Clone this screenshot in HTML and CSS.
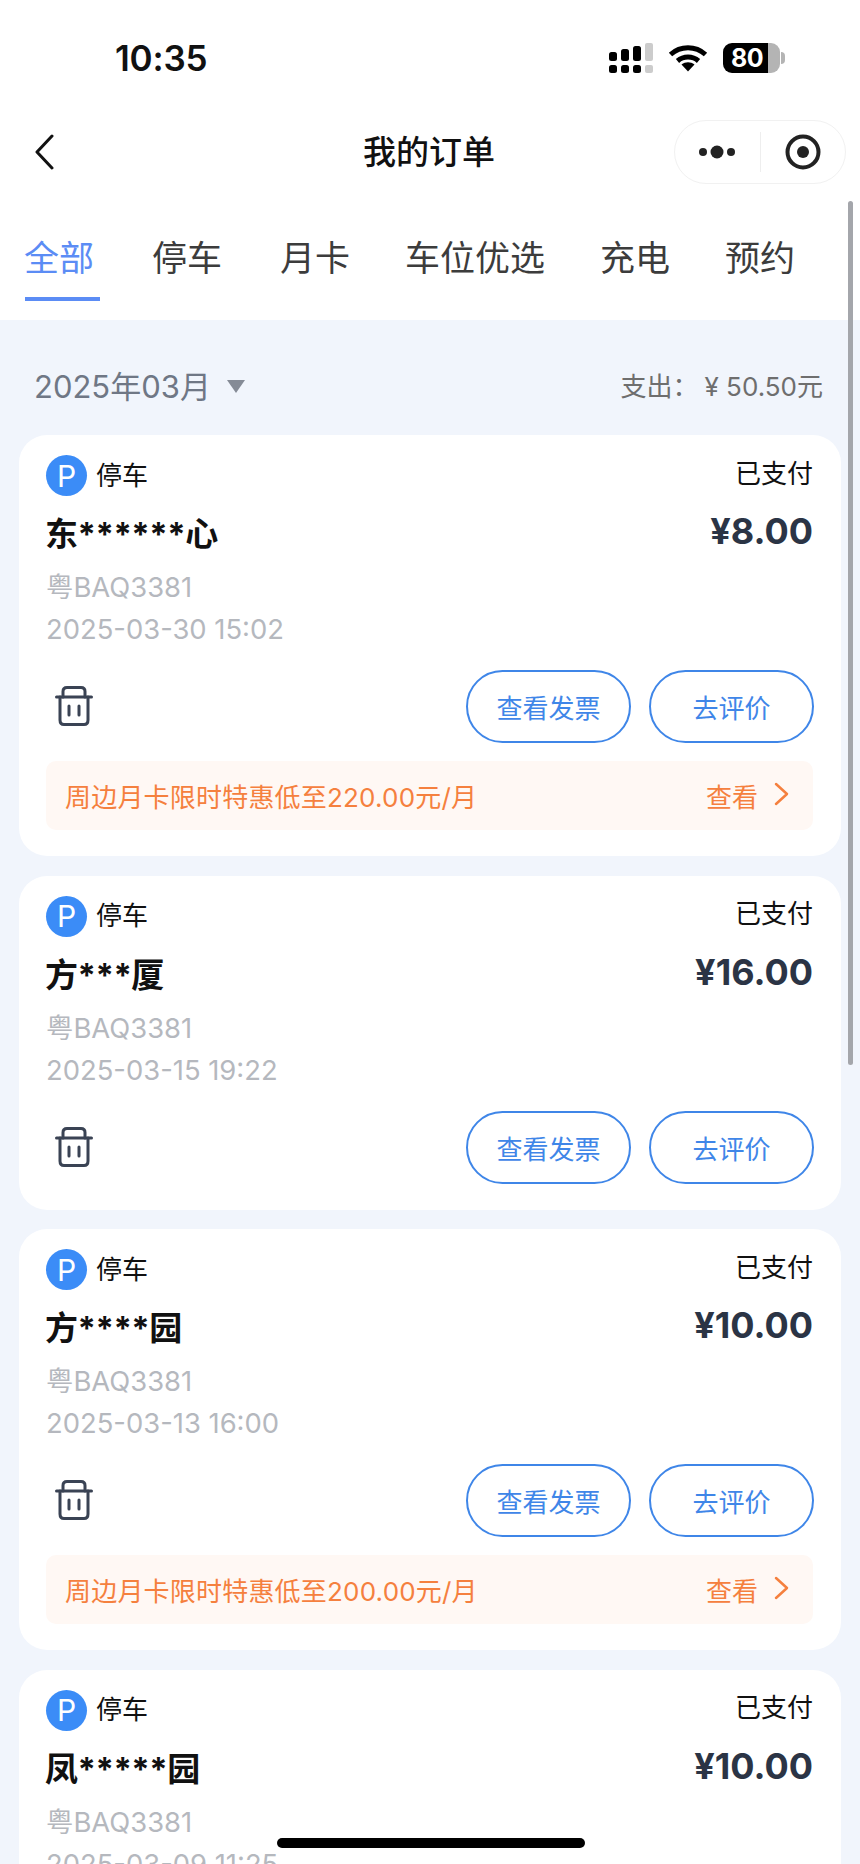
FILE: index.html
```html
<!DOCTYPE html>
<html lang="zh-CN">
<head>
<meta charset="UTF-8">
<meta name="viewport" content="width=device-width, initial-scale=1.0">
<title>我的订单</title>
<link rel="stylesheet" href="styles.css">
</head>
<body>
<div class="screen">
  <header class="top">
    <div class="status-bar">
      <span class="clock">10:35</span>
      <div class="status-icons">
        <svg class="signal" width="44" height="30" viewBox="0 0 44 30">
          <rect x="0" y="9" width="8" height="9" rx="2.5"/><rect x="12" y="6" width="8" height="12" rx="2.5"/><rect x="24" y="3" width="8" height="15" rx="2.5"/>
          <rect x="36" y="0" width="8" height="18" rx="2" fill="#ccc"/>
          <rect x="0" y="22" width="8" height="8" rx="2.5"/><rect x="12" y="22" width="8" height="8" rx="2.5"/><rect x="24" y="22" width="8" height="8" rx="2.5"/>
          <rect x="36" y="22" width="8" height="8" rx="2" fill="#ccc"/>
        </svg>
        <svg class="wifi" width="40" height="30" viewBox="0 0 40 30" fill="none" stroke="#000" stroke-width="5">
          <path d="M2.5 11.5C12.5 2.5 27.500 2.500 37.500 11.500"/>
          <path d="M9.500 18C15.500 12.800 24.500 12.800 30.500 18"/>
          <path d="M13.500 21.500L20 28.500L26.500 21.500C22.500 18.500 17.500 18.500 13.500 21.500Z" fill="#000" stroke="none"/>
        </svg>
        <div class="battery"><span class="battery-num">80</span></div>
      </div>
    </div>
    <div class="nav-bar">
      <div class="nav-left">
        <svg width="20" height="36" viewBox="0 0 20 36" fill="none" stroke="#111" stroke-width="3" stroke-linecap="round" stroke-linejoin="round"><path d="M18 2L3 18L18 34"/></svg>
      </div>
      <div class="nav-title">我的订单</div>
      <div class="nav-right">
        <div class="capsule">
          <div class="capsule-part">
            <svg width="38" height="14" viewBox="0 0 38 14" fill="#222"><circle cx="5" cy="7" r="4"/><circle cx="19" cy="7" r="6.500"/><circle cx="33" cy="7" r="4"/></svg>
          </div>
          <div class="capsule-line"></div>
          <div class="capsule-part">
            <svg width="36" height="36" viewBox="0 0 36 36" fill="#222"><circle cx="18" cy="18" r="15.500" fill="none" stroke="#222" stroke-width="4"/><circle cx="18" cy="18" r="6"/></svg>
          </div>
        </div>
      </div>
    </div>
    <ul class="tabs">
      <li class="tab active">全部</li>
      <li class="tab">停车</li>
      <li class="tab">月卡</li>
      <li class="tab">车位优选</li>
      <li class="tab">充电</li>
      <li class="tab">预约</li>
    </ul>
  </header>

  <main class="content">
    <div class="month-row">
      <div class="month">2025年03月<span class="month-arrow"></span></div>
      <div class="spend">支出：<span class="spend-yen">¥</span> 50.50元</div>
    </div>

    <div class="card">
      <div class="row-top">
        <div class="kind"><span class="p-icon">P</span>停车</div>
        <div class="state">已支付</div>
      </div>
      <div class="row-name">
        <div class="name">东******心</div>
        <div class="price">¥8.00</div>
      </div>
      <div class="meta">粤BAQ3381</div>
      <div class="meta meta-date">2025-03-30 15:02</div>
      <div class="row-actions">
        <svg class="trash" width="38" height="40" viewBox="0 0 38 40" fill="none" stroke="#3a4354" stroke-width="3" stroke-linecap="round" stroke-linejoin="round"><path d="M1.500 11H36.500"/><path d="M8 11V5.500C8 3 9.500 1.500 12 1.500H26C28.500 1.500 30 3 30 5.500V11"/><path d="M5 11V34C5 36.800 6.500 38.500 9 38.500H29C31.500 38.500 33 36.800 33 34V11"/><path d="M14 20V29M24 20V29"/></svg>
        <div class="btns"><a class="btn">查看发票</a><a class="btn">去评价</a></div>
      </div>
      <div class="promo">
        <span>周边月卡限时特惠低至220.00元/月</span>
        <span class="promo-link">查看<svg width="16" height="24" viewBox="0 0 16 24" fill="none" stroke="#f5803e" stroke-width="2.500" stroke-linecap="round" stroke-linejoin="round"><path d="M3 2L14 12L3 22"/></svg></span>
      </div>
    </div>

    <div class="card">
      <div class="row-top">
        <div class="kind"><span class="p-icon">P</span>停车</div>
        <div class="state">已支付</div>
      </div>
      <div class="row-name">
        <div class="name">方***厦</div>
        <div class="price">¥16.00</div>
      </div>
      <div class="meta">粤BAQ3381</div>
      <div class="meta meta-date">2025-03-15 19:22</div>
      <div class="row-actions">
        <svg class="trash" width="38" height="40" viewBox="0 0 38 40" fill="none" stroke="#3a4354" stroke-width="3" stroke-linecap="round" stroke-linejoin="round"><path d="M1.500 11H36.500"/><path d="M8 11V5.500C8 3 9.500 1.500 12 1.500H26C28.500 1.500 30 3 30 5.500V11"/><path d="M5 11V34C5 36.800 6.500 38.500 9 38.500H29C31.500 38.500 33 36.800 33 34V11"/><path d="M14 20V29M24 20V29"/></svg>
        <div class="btns"><a class="btn">查看发票</a><a class="btn">去评价</a></div>
      </div>
    </div>

    <div class="card">
      <div class="row-top">
        <div class="kind"><span class="p-icon">P</span>停车</div>
        <div class="state">已支付</div>
      </div>
      <div class="row-name">
        <div class="name">方****园</div>
        <div class="price">¥10.00</div>
      </div>
      <div class="meta">粤BAQ3381</div>
      <div class="meta meta-date">2025-03-13 16:00</div>
      <div class="row-actions">
        <svg class="trash" width="38" height="40" viewBox="0 0 38 40" fill="none" stroke="#3a4354" stroke-width="3" stroke-linecap="round" stroke-linejoin="round"><path d="M1.500 11H36.500"/><path d="M8 11V5.500C8 3 9.500 1.500 12 1.500H26C28.500 1.500 30 3 30 5.500V11"/><path d="M5 11V34C5 36.800 6.500 38.500 9 38.500H29C31.500 38.500 33 36.800 33 34V11"/><path d="M14 20V29M24 20V29"/></svg>
        <div class="btns"><a class="btn">查看发票</a><a class="btn">去评价</a></div>
      </div>
      <div class="promo">
        <span>周边月卡限时特惠低至200.00元/月</span>
        <span class="promo-link">查看<svg width="16" height="24" viewBox="0 0 16 24" fill="none" stroke="#f5803e" stroke-width="2.500" stroke-linecap="round" stroke-linejoin="round"><path d="M3 2L14 12L3 22"/></svg></span>
      </div>
    </div>

    <div class="card">
      <div class="row-top">
        <div class="kind"><span class="p-icon">P</span>停车</div>
        <div class="state">已支付</div>
      </div>
      <div class="row-name">
        <div class="name">凤*****园</div>
        <div class="price">¥10.00</div>
      </div>
      <div class="meta">粤BAQ3381</div>
      <div class="meta meta-date">2025-03-09 11:25</div>
    </div>
  </main>

  <div class="scrollbar"></div>
  <div class="home-bar"></div>
</div>
</body>
</html>
```

FILE: styles.css
```css
*{margin:0;padding:0;box-sizing:border-box;}
:root{
  --blue:#3f86e8;
  --tab-blue:#5b8cf5;
  --orange:#f5803e;
  --page:#f1f5fc;
  --grey:#b5b8be;
}
html,body{height:1864px;overflow:hidden;}
body{font-family:Inter,'Noto Sans CJK SC',sans-serif;background:var(--page);color:#111;}
.screen{position:relative;width:860px;height:1864px;overflow:hidden;}

.top{background:#fff;height:320px;padding-top:43px;}
.status-bar{display:flex;justify-content:space-between;align-items:center;height:30px;padding:0 80px 0 115px;}
.clock{font-size:35px;font-weight:600;line-height:40px;letter-spacing:-.2px;}
.status-icons{display:flex;align-items:center;gap:15px;}
.signal,.wifi{display:block;}
.battery{position:relative;width:57px;height:30px;border-radius:9px;background:linear-gradient(90deg,#000 0,#000 45px,#b4b4b4 45px);display:flex;align-items:center;padding-left:8px;}
.battery:after{content:'';position:absolute;right:-5px;top:9px;width:4px;height:12px;border-radius:0 4px 4px 0;background:#b4b4b4;}
.battery-num{color:#fff;font-size:25px;font-weight:700;line-height:30px;letter-spacing:-.5px;}

.nav-bar{display:grid;grid-template-columns:1fr auto 1fr;align-items:center;height:64px;margin-top:47px;padding:0 14px 0 12px;}
.nav-left{padding-left:22px;}
.nav-left svg{display:block;}
.nav-title{font-size:33px;font-weight:500;line-height:64px;}
.nav-right{display:flex;justify-content:flex-end;}
.capsule{display:flex;align-items:center;width:172px;height:64px;border:1px solid #f1f1f1;border-radius:32px;}
.capsule-part{flex:1;display:flex;align-items:center;justify-content:center;}
.capsule-line{width:1px;height:40px;background:#eee;}

.tabs{display:flex;list-style:none;gap:55px;padding:49px 0 0 24px;}
.tab{position:relative;font-size:35px;line-height:50px;color:#3c3c3c;height:68px;}
.tab:nth-child(-n+2){margin-right:3px;}
.tab.active{color:var(--tab-blue);}
.tab.active:after{content:'';position:absolute;left:1px;bottom:0;width:75px;height:4px;background:var(--tab-blue);}

.content{padding:0 19px;}
.month-row{display:flex;justify-content:space-between;align-items:center;height:115px;padding:14px 18px 0 16px;}
.month{display:flex;align-items:center;font-size:31px;color:#6f7785;margin-left:-1px;}
.month-arrow{width:0;height:0;margin:4px 0 0 16px;border-left:9.500px solid transparent;border-right:9.500px solid transparent;border-top:13px solid #858b96;}
.spend{font-size:26px;color:#6e6e6e;}
.spend-yen{margin-left:6px;}

.card{background:#fff;border-radius:28px;padding:20px 28px 26px 27px;margin-bottom:19.500px;}
.row-top{display:flex;justify-content:space-between;align-items:center;height:41px;}
.kind{display:flex;align-items:center;font-size:26px;gap:9px;line-height:36px;}
.p-icon{display:flex;align-items:center;justify-content:center;width:41px;height:41px;border-radius:50%;background:#3b8cf7;color:#fff;font-size:30px;font-weight:400;}
.state{font-size:26px;line-height:36px;margin-top:-4px;}
.row-name{display:flex;justify-content:space-between;align-items:center;height:52px;margin-top:12px;}
.name{font-size:33px;font-weight:700;line-height:52px;letter-spacing:-.5px;margin-left:-1px;}
.price{font-size:36px;font-weight:700;color:#2b3445;margin-top:-6px;}
.meta{font-size:27.400px;line-height:42px;color:var(--grey);margin-top:6px;}
.meta-date{margin-top:0;}
.row-actions{display:flex;justify-content:space-between;align-items:center;margin-top:20px;height:73px;padding-left:9px;}
.trash{display:block;margin-top:-1px;}
.btns{display:flex;gap:18px;margin-right:-1px;}
.btn{display:flex;align-items:center;justify-content:center;width:165px;height:73px;border:2px solid var(--blue);border-radius:37px;color:var(--blue);font-size:26px;}
.promo{display:flex;justify-content:space-between;align-items:center;height:69px;margin-top:18px;padding:0 24px 0 19px;background:#fff8f4;border-radius:10px;color:var(--orange);font-size:26px;letter-spacing:.2px;}
.promo-link{display:flex;align-items:center;gap:15px;letter-spacing:0;}
.promo-link svg{display:block;margin-top:-4px;}

.scrollbar{position:absolute;left:848px;top:201px;width:5px;height:864px;border-radius:3px;background:#a4a6ab;}
.home-bar{position:absolute;left:277px;top:1838px;width:308px;height:10px;border-radius:5px;background:#000;}
```
